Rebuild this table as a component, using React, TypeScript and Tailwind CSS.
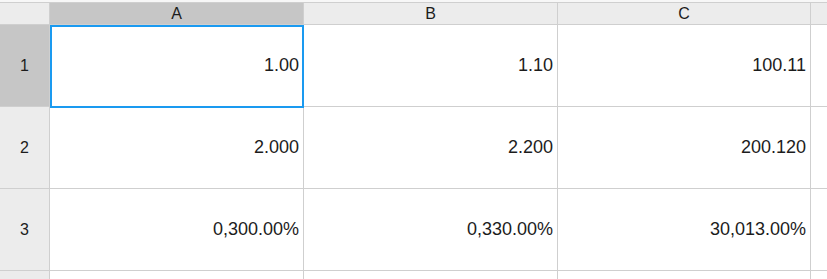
const columns = ["A", "B", "C"];

const rows = [
  { n: 1, cells: ["1.00", "1.10", "100.11"] },
  { n: 2, cells: ["2.000", "2.200", "200.120"] },
  { n: 3, cells: ["0,300.00%", "0,330.00%", "30,013.00%"] },
  { n: 4, cells: ["", "", ""] },
];

const colWidths = ["w-[254px]", "w-[254px]", "w-[253px]"];

export default function App() {
  const active = { row: 1, col: 0 };

  return (
    <div className="h-[279px] w-[827px] overflow-hidden bg-[#f7f7f7] pt-[2px] font-['Liberation_Sans',Arial,sans-serif] text-[#1c1c1c]">
      <div className="relative border-t border-[#cfcfcf] bg-white">
        {/* column headers */}
        <div className="flex h-[22px] border-b border-[#cfcfcf] bg-[#ececec] text-[16px] leading-none">
          <div className="w-[50px] shrink-0 border-r border-[#cfcfcf]" />
          {columns.map((c, i) => (
            <div
              key={c}
              className={`${colWidths[i]} flex shrink-0 items-center justify-center border-r border-[#cfcfcf] ${
                i === active.col ? "bg-[#c6c6c6]" : ""
              }`}
            >
              {c}
            </div>
          ))}
          <div className="flex-1" />
        </div>

        {/* rows */}
        {rows.map((r) => (
          <div key={r.n} className="flex h-[82px] border-b border-[#cfcfcf]">
            <div
              className={`flex w-[50px] shrink-0 items-center justify-center border-r border-[#cfcfcf] text-[16px] ${
                r.n === active.row ? "bg-[#c6c6c6]" : "bg-[#ececec]"
              }`}
            >
              {r.n}
            </div>
            {r.cells.map((v, i) => (
              <div
                key={i}
                className={`${colWidths[i]} flex shrink-0 items-center justify-end border-r border-[#cfcfcf] pr-[4px] text-[18px]`}
              >
                {v}
              </div>
            ))}
            <div className="flex-1" />
          </div>
        ))}

        {/* cell cursor on A1 */}
        <div className="pointer-events-none absolute left-[50px] top-[22px] h-[83px] w-[254px] border-2 border-[#1a9af0]" />
      </div>
    </div>
  );
}
